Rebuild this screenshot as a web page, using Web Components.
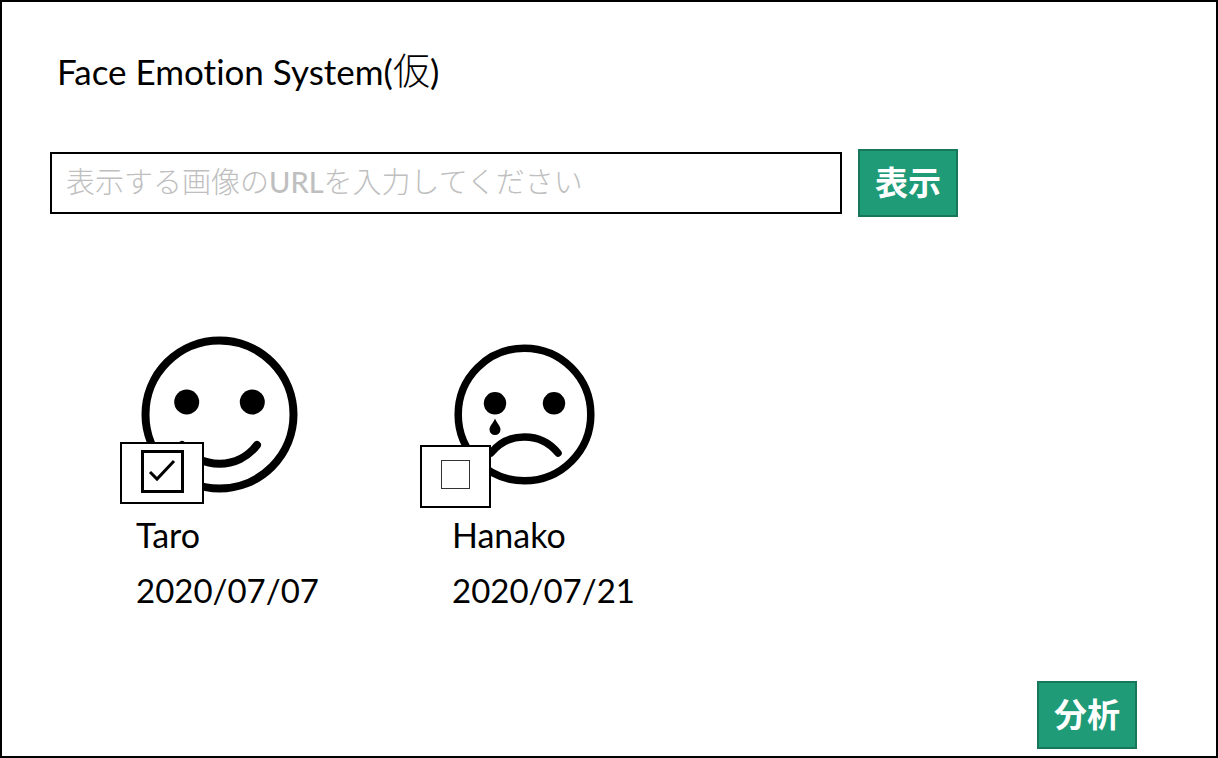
<!DOCTYPE html>
<html lang="ja">
<head>
<meta charset="utf-8">
<meta name="viewport" content="width=device-width, initial-scale=1">
<title>Face Emotion System(仮)</title>
<style>
  body { margin: 0; background: #fff; color: #000; font: 400 33px/40px Lato, "Noto Sans CJK JP", sans-serif; font-variant-ligatures: none; }
</style>
</head>
<body>
<emotion-app>
  <app-title slot="title">Face Emotion System(<span>仮</span>)</app-title>
  <url-search slot="search"></url-search>
  <face-card mood="happy" name="Taro" date="2020/07/07" checked></face-card>
  <face-card mood="sad" name="Hanako" date="2020/07/21"></face-card>
  <action-button slot="actions">分析</action-button>
</emotion-app>

<script>
  class BaseElement extends HTMLElement {
    connectedCallback() {
      if (this.shadowRoot) return;
      this.attachShadow({ mode: "open" }).innerHTML = this.render();
    }
  }

  customElements.define("emotion-app", class extends BaseElement {
    render() {
      return `<style>
        :host { display: flex; flex-direction: column; box-sizing: border-box; min-height: 100vh; border: 2px solid #000; }
        header { padding: 48px 55px 0; }
        .search { padding: 57px 48px 0; }
        main { display: grid; grid-template-columns: repeat(auto-fill, 300px); gap: 32px 16px; padding: 119px 48px 24px 134px; }
        footer { display: flex; justify-content: flex-end; margin-top: auto; padding: 0 79px 7px; }
      </style>
      <header><slot name="title"></slot></header>
      <section class="search"><slot name="search"></slot></section>
      <main><slot></slot></main>
      <footer><slot name="actions"></slot></footer>`;
    }
  });

  customElements.define("app-title", class extends BaseElement {
    render() {
      return `<style>
        :host { display: block; }
        h1 { margin: 0; font-size: 35px; line-height: 42px; font-weight: 400; }
        ::slotted(span) { font-size: 37px; font-weight: 300; line-height: 1; font-family: "Noto Sans CJK JP Light", "Noto Sans CJK JP", sans-serif; }
      </style><h1><slot></slot></h1>`;
    }
  });

  customElements.define("action-button", class extends BaseElement {
    render() {
      return `<style>
        :host { display: block; flex: none; }
        button { display: block; box-sizing: border-box; width: 100px; height: 68px; padding: 0 0 4px; border: 2px solid #16775a;
          background: #1f9b78; color: #fff; font: 700 33px/48px "Noto Sans CJK JP", sans-serif; cursor: pointer; }
      </style><button type="button"><slot></slot></button>`;
    }
  });

  customElements.define("url-search", class extends BaseElement {
    render() {
      return `<style>
        :host { display: flex; align-items: center; gap: 16px; max-width: 908px; }
        input { flex: 1; min-width: 0; box-sizing: border-box; height: 62px; padding: 0 14px 4px; border: 2px solid #000; border-radius: 0;
          background: #fff; color: #000; font: 300 29px/44px "Lato Medium", Lato, "Noto Sans CJK JP Light", "Noto Sans CJK JP", sans-serif; }
        input::placeholder { color: #bfbfbf; opacity: 1; }
      </style>
      <input type="url" aria-label="画像のURL" placeholder="表示する画像のURLを入力してください">
      <action-button>表示</action-button>`;
    }
  });

  const faces = {
    happy: `<svg width="158" height="158" viewBox="0 0 158 158" aria-hidden="true">
      <circle cx="79.500" cy="78.500" r="74" fill="none" stroke="#000" stroke-width="8"/>
      <circle cx="46.700" cy="66" r="12.500"/><circle cx="112.300" cy="66" r="12.500"/>
      <path d="M42 109C61 134 98 134 117 109" fill="none" stroke="#000" stroke-width="8" stroke-linecap="round"/></svg>`,
    sad: `<svg width="142" height="142" viewBox="0 0 142 142" aria-hidden="true">
      <circle cx="70.500" cy="70.500" r="66.300" fill="none" stroke="#000" stroke-width="7.500"/>
      <circle cx="41" cy="59.300" r="11.200"/><circle cx="100" cy="59.300" r="11.200"/>
      <path d="M41 74.500C39 79.500 35.500 82 35.500 85.500a5.500 5.500 0 0 0 11 0C46.500 82 43 79.500 41 74.500Z"/>
      <path d="M37 109C54 87.500 87 87.500 104 109" fill="none" stroke="#000" stroke-width="7.500" stroke-linecap="round"/></svg>`
  };

  customElements.define("face-card", class extends BaseElement {
    render() {
      const mood = this.getAttribute("mood");
      const name = this.getAttribute("name");
      return `<style>
        :host { display: block; }
        article { position: relative; }
        .face { display: flex; align-items: center; height: 158px; padding-left: 4px; }
        :host([mood="sad"]) .face { padding-left: 2px; }
        svg { display: block; }
        label { display: block; margin-top: 21px; font-size: 34px; }
        time { display: block; margin-top: 15px; }
        .badge { position: absolute; box-sizing: border-box; display: grid; place-items: center; top: 106px; left: -16px;
          width: 84px; height: 62px; padding-bottom: 3px; border: 2px solid #000; background: #fff; }
        .badge > * { grid-area: 1 / 1; }
        .badge svg { pointer-events: none; visibility: hidden; }
        input { appearance: none; box-sizing: border-box; width: 29px; height: 29px; margin: 0; border: 1px solid #333; border-radius: 0; background: #fff; }
        input:checked { width: 43px; height: 43px; border: 3px solid #000; }
        input:checked + svg { visibility: visible; }
        :host([mood="sad"]) .badge { top: 109px; left: -32px; width: 71px; height: 63px; padding-bottom: 4px; }
      </style>
      <article>
        <div class="face">${faces[mood]}</div>
        <div class="badge">
          <input type="checkbox" id="pick" ${this.hasAttribute("checked") ? "checked" : ""}>
          <svg width="43" height="43" viewBox="0 0 43 43" aria-hidden="true"><path d="M9 22L16 29L33 11" fill="none" stroke="#000" stroke-width="3"/></svg>
        </div>
        <label for="pick">${name}</label>
        <time datetime="${this.getAttribute("date").replaceAll("/", "-")}">${this.getAttribute("date")}</time>
      </article>`;
    }
  });
</script>
</body>
</html>
